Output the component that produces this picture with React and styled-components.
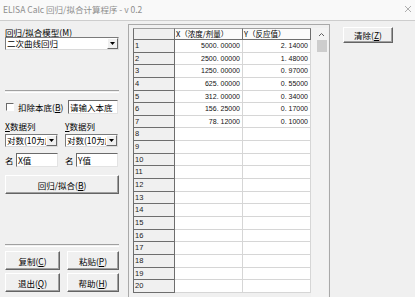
import React from 'react';
import styled, { createGlobalStyle } from 'styled-components';

const Global = createGlobalStyle`
  html, body { margin: 0; padding: 0; background: #f0f0f0; }
  body { font-family: "Noto Sans CJK SC", "Liberation Sans", sans-serif; color: #000; }
  #root { width: 415px; height: 297px; overflow: hidden; }
`;

const Window = styled.div`
  width: 415px;
  height: 297px;
  display: flex;
  flex-direction: column;
  background: #f0f0f0;
  overflow: hidden;
`;

const TitleBar = styled.div`
  height: 21px;
  flex: none;
  box-sizing: border-box;
  display: flex;
  align-items: center;
  justify-content: space-between;
  padding: 0 3px 2px 3px;
  background: #f9f9f9;
  border-bottom: 1px solid #cdcdcd;
  font-size: 8.5px;
  line-height: 10px;
  color: #8e8e8e;
  white-space: nowrap;
`;

const Body = styled.div`
  flex: 1;
  min-height: 0;
  display: flex;
`;

const LeftPanel = styled.div`
  width: 128px;
  flex: none;
  box-sizing: border-box;
  padding: 0 9px 0 5px;
  display: flex;
  flex-direction: column;
`;

const Label = styled.div`
  font-size: 8.5px;
  line-height: 10px;
  height: 10px;
  margin-top: ${p => p.$mt || 0}px;
  white-space: nowrap;
`;

const Row = styled.div`
  display: flex;
  align-items: center;
  gap: ${p => p.$gap || 0}px;
  margin-top: ${p => p.$mt || 0}px;
  height: ${p => p.$h || 13}px;
`;

const Combo = styled.div`
  width: ${p => p.$w}px;
  height: 13px;
  box-sizing: border-box;
  display: flex;
  background: #fff;
  border: 1px solid;
  border-color: #7a7a7a #dadada #dadada #7a7a7a;
  margin-top: ${p => p.$mt || 0}px;
  flex: none;
`;

const ComboText = styled.div`
  flex: 1;
  overflow: hidden;
  white-space: nowrap;
  font-size: 8.5px;
  line-height: 11px;
  padding-left: 1px;
`;

const ComboBtn = styled.div`
  width: 11px;
  flex: none;
  box-sizing: border-box;
  background: #f0f0f0;
  border: 1px solid;
  border-color: #fff #6a6a6a #6a6a6a #fff;
  display: flex;
  align-items: center;
  justify-content: center;
`;

const Separator = styled.div`
  height: 1px;
  border-top: 1px solid #a0a0a0;
  border-bottom: 1px solid #fff;
  margin-top: ${p => p.$mt || 0}px;
`;

const CheckBox = styled.div`
  width: 8px;
  height: 8px;
  box-sizing: border-box;
  background: #fff;
  border: 1px solid;
  border-color: #6a6a6a #fff #fff #6a6a6a;
  margin-left: 1px;
  margin-right: 4px;
  flex: none;
`;

const Text = styled.span`
  font-size: 8.5px;
  line-height: 10px;
  white-space: nowrap;
  width: ${p => (p.$w ? `${p.$w}px` : 'auto')};
  flex: none;
`;

const Input = styled.div`
  width: ${p => p.$w}px;
  height: 14px;
  flex: none;
  box-sizing: border-box;
  background: #fff;
  border: 1px solid;
  border-color: #6a6a6a #e3e3e3 #e3e3e3 #6a6a6a;
  font-size: 8.5px;
  line-height: 12px;
  padding-left: 1px;
  white-space: nowrap;
  overflow: hidden;
`;

const Pair = styled.div`
  display: flex;
  align-items: center;
  width: 53px;
  flex: none;
`;

const Button = styled.div`
  width: ${p => p.$w}px;
  height: ${p => p.$h || 19}px;
  flex: none;
  box-sizing: border-box;
  background: #f0f0f0;
  border: 1px solid;
  border-color: #fff #646464 #646464 #fff;
  box-shadow: inset -1px -1px 0 #a0a0a0;
  display: flex;
  align-items: center;
  justify-content: center;
  font-size: 8.5px;
  line-height: 10px;
  white-space: nowrap;
  margin-top: ${p => p.$mt || 0}px;
`;

const BtnRow = styled.div`
  display: flex;
  gap: 7px;
  margin-top: ${p => p.$mt || 0}px;
`;

const GridFrame = styled.div`
  width: 202px;
  flex: none;
  box-sizing: border-box;
  margin-top: 3px;
  border: 1px solid #a9a9a9;
  border-bottom: none;
  padding: 3px 1px 0 4px;
  display: flex;
  overflow: hidden;
  background: #f0f0f0;
`;

const Table = styled.div`
  display: grid;
  grid-template-columns: 42px 68px 68px;
  grid-template-rows: 12px;
  grid-auto-rows: 12.65px;
  width: 178px;
  flex: none;
  align-self: flex-start;
`;

const HeadCell = styled.div`
  box-sizing: border-box;
  background: ${p => (p.$corner ? '#f0f0f0' : '#fbfbfb')};
  border-top: 1px solid #a0a0a0;
  border-left: ${p => (p.$corner ? '1px solid #6e6e6e' : 'none')};
  border-right: 1px solid #6e6e6e;
  border-bottom: 1px solid #6e6e6e;
  font-size: 7.5px;
  line-height: 10px;
  padding-left: 1px;
  white-space: nowrap;
  overflow: hidden;
`;

const RowHead = styled.div`
  box-sizing: border-box;
  background: #f0f0f0;
  border-left: 1px solid #6e6e6e;
  border-right: 1.5px solid #6e6e6e;
  border-bottom: 1px solid #6e6e6e;
  font-family: "Liberation Sans", sans-serif;
  font-size: 7.5px;
  line-height: 11px;
  padding-left: 1px;
  color: #222;
  overflow: hidden;
`;

const Cell = styled.div`
  box-sizing: border-box;
  background: #fff;
  border-right: 1px solid #d6d6d6;
  border-bottom: 1px solid #d6d6d6;
  font-family: "Liberation Sans", sans-serif;
  font-size: 7px;
  line-height: 11px;
  text-align: right;
  padding-right: 2px;
  white-space: pre;
  color: #111;
`;

const ScrollBar = styled.div`
  width: 17px;
  flex: none;
  align-self: stretch;
  background: #f3f3f3;
  display: flex;
  flex-direction: column;
  align-items: center;
`;

const ScrollArrow = styled.div`
  height: 12px;
  width: 17px;
  display: flex;
  align-items: center;
  justify-content: center;
  padding-left: 3px;
  box-sizing: border-box;
`;

const Thumb = styled.div`
  width: 10px;
  height: 12px;
  margin-left: 4px;
  background: #cdcdcd;
`;

const RightPanel = styled.div`
  flex: 1;
  padding: 6px 0 0 13px;
`;

const rows = [
  ['5000. 00000', '2. 14000'],
  ['2500. 00000', '1. 48000'],
  ['1250. 00000', '0. 97000'],
  ['625. 00000', '0. 55000'],
  ['312. 00000', '0. 34000'],
  ['156. 25000', '0. 17000'],
  ['78. 12000', '0. 10000'],
];

const Arrow = () => (
  <svg width="5" height="3" viewBox="0 0 5 3">
    <path d="M0 0H5L2.5 3Z" fill="#000" />
  </svg>
);

export default function App() {
  const all = Array.from({ length: 20 }, (_, i) => rows[i] || ['', '']);
  return (
    <Window>
      <Global />
      <TitleBar>
        <span>ELISA Calc 回归/拟合计算程序 - v 0.2</span>
        <svg width="8" height="8" viewBox="0 0 8 8" style={{ marginRight: 0 }}>
          <path d="M1 1L7 7M7 1L1 7" stroke="#9a9a9a" strokeWidth="0.8" />
        </svg>
      </TitleBar>
      <Body>
        <LeftPanel>
          <Label $mt={6}>回归/拟合模型(<u>M</u>)</Label>
          <Combo $w={114}>
            <ComboText>二次曲线回归</ComboText>
            <ComboBtn><Arrow /></ComboBtn>
          </Combo>
          <Separator $mt={40} />
          <Row $mt={7} $h={14}>
            <CheckBox />
            <Text $w={50}>扣除本底(<u>B</u>)</Text>
            <Input $w={50}>请输入本底</Input>
          </Row>
          <Row $mt={7} $h={10} $gap={7}>
            <Text $w={53}><u>X</u>数据列</Text>
            <Text $w={53}><u>Y</u>数据列</Text>
          </Row>
          <Row $mt={3} $gap={7}>
            <Combo $w={53}>
              <ComboText>对数(10为底</ComboText>
              <ComboBtn><Arrow /></ComboBtn>
            </Combo>
            <Combo $w={53}>
              <ComboText>对数(10为底</ComboText>
              <ComboBtn><Arrow /></ComboBtn>
            </Combo>
          </Row>
          <Row $mt={6} $h={14} $gap={7}>
            <Pair>
              <Text $w={11}>名</Text>
              <Input $w={42}>X值</Input>
            </Pair>
            <Pair>
              <Text $w={11}>名</Text>
              <Input $w={42}>Y值</Input>
            </Pair>
          </Row>
          <Button $w={114} $mt={8}>回归/拟合(<u>B</u>)</Button>
          <Separator $mt={50} />
          <BtnRow $mt={4}>
            <Button $w={55} $h={19}>复制(<u>C</u>)</Button>
            <Button $w={52} $h={19}>粘贴(<u>P</u>)</Button>
          </BtnRow>
          <BtnRow $mt={3}>
            <Button $w={55} $h={19}>退出(<u>Q</u>)</Button>
            <Button $w={52} $h={19}>帮助(<u>H</u>)</Button>
          </BtnRow>
        </LeftPanel>
        <GridFrame>
          <Table>
            <HeadCell $corner />
            <HeadCell>X（浓度/剂量）</HeadCell>
            <HeadCell>Y（反应值）</HeadCell>
            {all.map((r, i) => (
              <React.Fragment key={i}>
                <RowHead>{i + 1}</RowHead>
                <Cell>{r[0]}</Cell>
                <Cell>{r[1]}</Cell>
              </React.Fragment>
            ))}
          </Table>
          <ScrollBar>
            <ScrollArrow>
              <svg width="7" height="5" viewBox="0 0 7 5">
                <path d="M1 4L3.5 1.5L6 4" stroke="#606060" strokeWidth="1" fill="none" />
              </svg>
            </ScrollArrow>
            <Thumb />
          </ScrollBar>
        </GridFrame>
        <RightPanel>
          <Button $w={50} $h={16}>清除(<u>Z</u>)</Button>
        </RightPanel>
      </Body>
    </Window>
  );
}
